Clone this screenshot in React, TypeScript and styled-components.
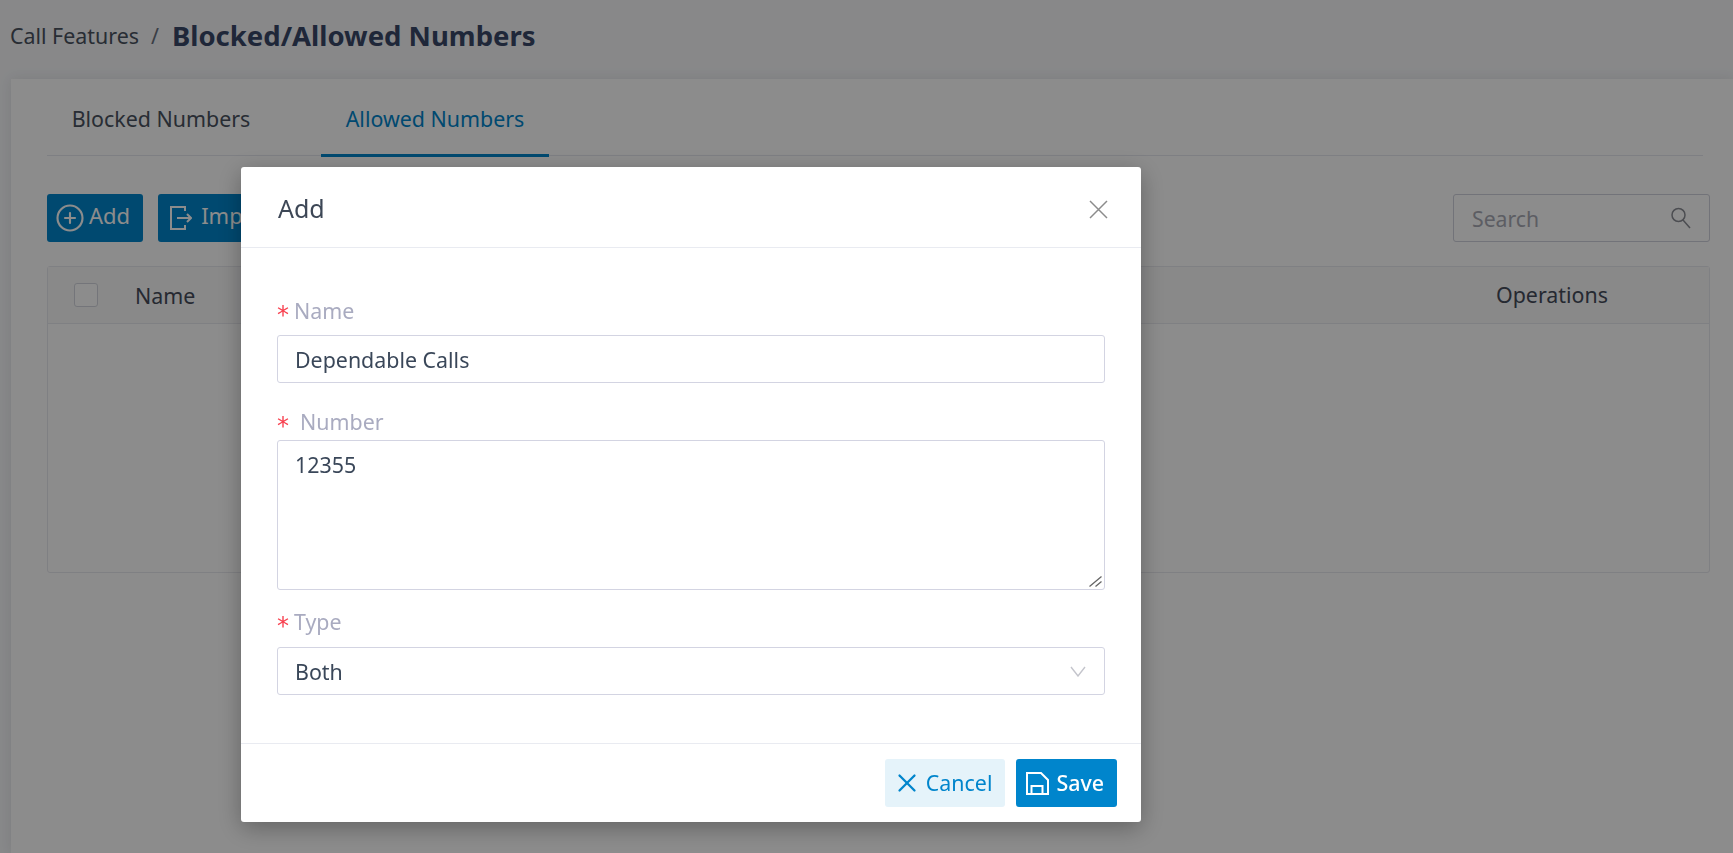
import React from "react";
import styled, { createGlobalStyle } from "styled-components";
import { CirclePlus, X } from "lucide-react";

const GlobalStyle = createGlobalStyle`
    html, body {
        margin: 0;
        height: 100%;
        overflow: hidden;
    }
    body {
        background: #f7f8fa;
        font-family: "Noto Sans", "Open Sans", sans-serif;
        color: #2f3a4b;
    }
    * {
        box-sizing: border-box;
    }
`;

const Page = styled.div`
    height: 853px;
    display: flex;
    flex-direction: column;
`;

const Breadcrumb = styled.div`
    height: 79px;
    flex: none;
    display: flex;
    align-items: center;
    padding: 0 0 9px 10px;
`;

const Crumb = styled.span`
    font-size: 21.4px;
    color: #4a5260;
`;

const CrumbSeparator = styled.span`
    font-size: 21.4px;
    color: #6a7180;
    margin: 0 13px 0 12px;
`;

const PageTitle = styled.h1`
    margin: 0;
    font-size: 27.5px;
    font-weight: 700;
    color: #3a4868;
`;

const Card = styled.div`
    flex: 1;
    margin-left: 11px;
    padding: 0 23px 0 36px;
    background: #fff;
    box-shadow: 0 0 12px rgba(30, 40, 60, 0.1);
`;

const Tabs = styled.div`
    height: 77px;
    margin-right: 7px;
    display: flex;
    border-bottom: 1px solid #e6e8ee;
`;

const Tab = styled.div<{ $active?: boolean }>`
    height: 78px;
    width: 228px;
    padding-top: 4px;
    margin-left: ${(p) => (p.$active ? "46px" : "0")};
    display: flex;
    align-items: center;
    justify-content: center;
    font-size: 21.4px;
    color: ${(p) => (p.$active ? "#0085cc" : "#4a5260")};
    border-bottom: 3px solid ${(p) => (p.$active ? "#0085cc" : "transparent")};
`;

const Toolbar = styled.div`
    margin-top: 38px;
    display: flex;
    align-items: center;
    gap: 15px;
`;

const ToolButton = styled.button`
    height: 48px;
    padding: 0 13px 7px 8px;
    display: flex;
    align-items: center;
    gap: 4px;
    border: none;
    border-radius: 3px;
    background: #0085cc;
    color: #fff;
    font-family: inherit;
    font-size: 22px;

    svg {
        margin-top: 7px;
    }
`;

const ImportButton = styled(ToolButton)`
    padding-left: 12px;
    gap: 9px;
`;

const SearchBox = styled.div`
    width: 257px;
    height: 48px;
    margin-left: auto;
    padding: 0 18px;
    display: flex;
    align-items: center;
    justify-content: space-between;
    border: 1px solid #cfd1dc;
    border-radius: 3px;
    font-size: 21.2px;
    color: #a8aab4;
`;

const Table = styled.div`
    margin-top: 24px;
    height: 307px;
    border: 1px solid #e8e9ee;
    border-radius: 3px;
`;

const TableHead = styled.div`
    height: 57px;
    padding-left: 26px;
    display: flex;
    align-items: center;
    background: #f9f9fa;
    border-bottom: 1px solid #e8e9ee;
    font-size: 21.4px;
    color: #454c5a;
`;

const Checkbox = styled.span`
    width: 24px;
    height: 24px;
    border: 1px solid #d4d6de;
    border-radius: 3px;
    background: #fff;
`;

const NameHead = styled.span`
    margin-left: 37px;
`;

const OperationsHead = styled.span`
    margin-left: auto;
    width: 225px;
    height: 58px;
    padding-left: 12px;
    display: flex;
    align-items: center;
    border-bottom: 1px solid #e8e9ee;
`;

const Overlay = styled.div`
    position: fixed;
    inset: 0;
    padding: 167px 0 0 241px;
    background: rgba(0, 0, 0, 0.45);
`;

const Modal = styled.div`
    width: 900px;
    height: 655px;
    background: #fff;
    border-radius: 3px;
    box-shadow: 0 6px 24px rgba(0, 0, 0, 0.3);
`;

const ModalHeader = styled.div`
    height: 81px;
    padding: 2px 33px 0 37px;
    display: flex;
    align-items: center;
    justify-content: space-between;
    border-bottom: 1px solid #e9ebf1;
`;

const ModalTitle = styled.h2`
    margin: 0;
    font-size: 25px;
    font-weight: 400;
    color: #3d4756;
`;

const CloseIcon = styled.svg`
    margin-top: 2px;
`;

const ModalBody = styled.div`
    padding: 48px 36px 48px;
`;

const FormItem = styled.div<{ $top: number }>`
    margin-top: ${(p) => p.$top}px;
`;

const Label = styled.div<{ $gap: number; $wide?: boolean }>`
    height: 28px;
    margin-bottom: ${(p) => p.$gap + 2}px;
    display: flex;
    align-items: center;
    gap: ${(p) => (p.$wide ? "11px" : "5px")};
    font-size: 21.4px;
    color: #a9abc0;
`;

const Star = styled.span`
    font-family: "DejaVu Sans", sans-serif;
    font-size: 24px;
    line-height: 24px;
    height: 24px;
    padding-top: 5px;
    color: #f8404f;
`;

const TextInput = styled.div`
    height: 48px;
    padding: 1px 18px 0 17px;
    display: flex;
    align-items: center;
    justify-content: space-between;
    border: 1px solid #d3d4e2;
    border-radius: 3px;
    font-size: 21.4px;
    color: #3a4759;
`;

const SelectInput = styled(TextInput)`
    padding-top: 0;
`;

const TextAreaWrap = styled.div`
    position: relative;
`;

const TextArea = styled.textarea`
    display: block;
    width: 100%;
    height: 150px;
    padding: 9px 17px;
    border: 1px solid #d3d4e2;
    border-radius: 3px;
    outline: none;
    resize: none;
    font-family: inherit;
    font-size: 21.4px;
    color: #3a4759;
`;

const ResizeHandle = styled.svg`
    position: absolute;
    right: 3px;
    bottom: 3px;
`;

const ModalFooter = styled.div`
    height: 79px;
    padding: 15px 24px;
    display: flex;
    justify-content: flex-end;
    gap: 11px;
    border-top: 1px solid #e9ebf1;
`;

const FooterButton = styled.button`
    height: 48px;
    display: flex;
    align-items: center;
    border: none;
    border-radius: 3px;
    font-family: inherit;
    font-size: 21.4px;
`;

const CancelButton = styled(FooterButton)`
    padding: 0 13px 2px 7px;
    gap: 4px;
    background: #e5f3fa;
    color: #0085cc;

    svg {
        margin-top: 2px;
    }
`;

const SaveButton = styled(FooterButton)`
    padding: 0 13px 2px 10px;
    gap: 7px;
    background: #0085cc;
    color: #fff;
    font-weight: 500;

    svg {
        margin-top: 2px;
    }
`;

const App: React.FC = () => {
    return (
        <>
            <GlobalStyle />
            <Page>
                <Breadcrumb>
                    <Crumb>Call Features</Crumb>
                    <CrumbSeparator>/</CrumbSeparator>
                    <PageTitle>Blocked/Allowed Numbers</PageTitle>
                </Breadcrumb>
                <Card>
                    <Tabs>
                        <Tab>Blocked Numbers</Tab>
                        <Tab $active>Allowed Numbers</Tab>
                    </Tabs>
                    <Toolbar>
                        <ToolButton>
                            <CirclePlus size={30} strokeWidth={1.7} />
                            Add
                        </ToolButton>
                        <ImportButton>
                            <svg width="22" height="26" viewBox="0 0 22 26" fill="none" stroke="currentColor" strokeWidth="2">
                                <path d="M15 6V2H1v22h14v-4" />
                                <path d="M7 13h14M17 9l4 4-4 4" />
                            </svg>
                            Import
                        </ImportButton>
                        <SearchBox>
                            Search
                            <svg width="20" height="22" viewBox="0 0 20 22" fill="none" stroke="#8a8c94" strokeWidth="1.5">
                                <circle cx="7.5" cy="8" r="6.5" />
                                <path d="M12 13l7 8" />
                            </svg>
                        </SearchBox>
                    </Toolbar>
                    <Table>
                        <TableHead>
                            <Checkbox />
                            <NameHead>Name</NameHead>
                            <OperationsHead>Operations</OperationsHead>
                        </TableHead>
                    </Table>
                </Card>
            </Page>
            <Overlay>
                <Modal>
                    <ModalHeader>
                        <ModalTitle>Add</ModalTitle>
                        <CloseIcon width="19" height="19" viewBox="0 0 19 19" fill="none" stroke="#8c8c8c" strokeWidth="1.5">
                            <path d="M1 1l17 17M18 1L1 18" />
                        </CloseIcon>
                    </ModalHeader>
                    <ModalBody>
                        <FormItem $top={0}>
                            <Label $gap={9}>
                                <Star>*</Star>
                                Name
                            </Label>
                            <TextInput>Dependable Calls</TextInput>
                        </FormItem>
                        <FormItem $top={24}>
                            <Label $gap={3} $wide>
                                <Star>*</Star>
                                Number
                            </Label>
                            <TextAreaWrap>
                                <TextArea defaultValue="12355" />
                                <ResizeHandle width="13" height="11" viewBox="0 0 13 11" fill="none" stroke="#666" strokeWidth="1.3">
                                    <path d="M0.5 10.5L12.5 0.5M6.5 10.5L12.5 5.5" />
                                </ResizeHandle>
                            </TextAreaWrap>
                        </FormItem>
                        <FormItem $top={17}>
                            <Label $gap={10}>
                                <Star>*</Star>
                                Type
                            </Label>
                            <SelectInput>
                                Both
                                <svg width="16" height="11" viewBox="0 0 16 11" fill="none" stroke="#c4c5cc" strokeWidth="1.4">
                                    <path d="M1 1l7 9 7-9" />
                                </svg>
                            </SelectInput>
                        </FormItem>
                    </ModalBody>
                    <ModalFooter>
                        <CancelButton>
                            <X size={30} strokeWidth={1.8} />
                            Cancel
                        </CancelButton>
                        <SaveButton>
                            <svg width="23" height="23" viewBox="0 0 23 23" fill="none" stroke="currentColor" strokeWidth="2">
                                <path d="M1 1h14l7 7v14H1z" />
                                <path d="M5.5 22v-8h11v8" />
                            </svg>
                            Save
                        </SaveButton>
                    </ModalFooter>
                </Modal>
            </Overlay>
        </>
    );
};

export default App;
